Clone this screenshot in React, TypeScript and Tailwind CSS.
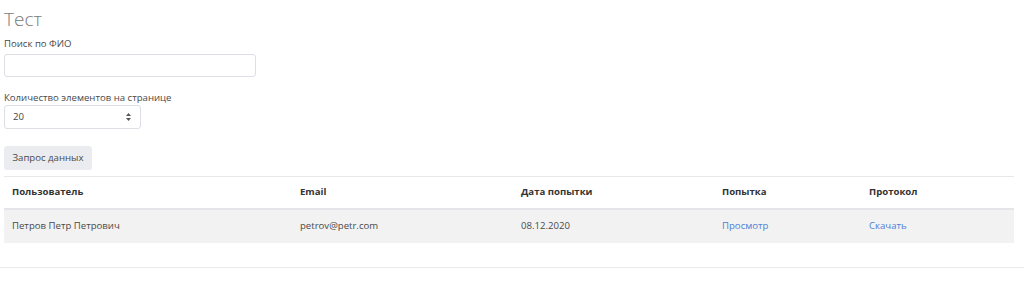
import React from "react";

const COLS = "grid grid-cols-[288px_221px_201px_147px_153px]";

const HEADERS = ["Пользователь", "Email", "Дата попытки", "Попытка", "Протокол"];

export default function App() {
  return (
    <div className="min-h-[300px] bg-white font-['Open_Sans',sans-serif] text-[9.6px] text-[#4a4a4a]">
      <div className="pl-[4px] pr-[10px] pt-[7px]">
        {/* Title */}
        <h1 className="text-[19px] font-light leading-[24px] text-[#7a7a7a]">Тест</h1>

        {/* Search */}
        <label className="mt-[6px] block leading-[14px]">Поиск по ФИО</label>
        <input className="mt-[3px] block h-[23px] w-[252px] rounded-[3px] border border-[#dcdfe3] bg-white" />

        {/* Page size */}
        <label className="mt-[14px] block leading-[14px]">Количество элементов на странице</label>
        <div className="flex h-[24px] w-[137px] items-center justify-between rounded-[3px] border border-[#dcdfe3] bg-white pl-[8px] pr-[9px]">
          <span className="text-[#444]">20</span>
          <svg width="5" height="8" viewBox="0 0 5 8" fill="#555">
            <path d="M2.5 0 L5 3 H0 Z" />
            <path d="M2.5 8 L5 5 H0 Z" />
          </svg>
        </div>

        {/* Button */}
        <button className="mt-[17px] flex h-[24px] w-[88px] items-center justify-center rounded-[3px] bg-[#eaecef] text-[#4a4a4a]">
          Запрос данных
        </button>

        {/* Table */}
        <div className="mt-[6px] border-t border-[#e6e8ea]">
          <div className={`${COLS} h-[33px] items-center border-b-2 border-[#e3e5e8] font-bold text-[#333]`}>
            {HEADERS.map((h) => (
              <div key={h} className="pl-[8px]">
                {h}
              </div>
            ))}
          </div>
          <div className={`${COLS} h-[33px] items-center bg-[#f2f2f2]`}>
            <div className="pl-[8px]">Петров Петр Петрович</div>
            <div className="pl-[8px]">petrov@petr.com</div>
            <div className="pl-[8px]">08.12.2020</div>
            <div className="pl-[8px] text-[#4f80d6]">Просмотр</div>
            <div className="pl-[8px] text-[#4f80d6]">Скачать</div>
          </div>
        </div>
      </div>

      <hr className="mt-[24px] border-t border-[#e9eaec]" />
    </div>
  );
}
